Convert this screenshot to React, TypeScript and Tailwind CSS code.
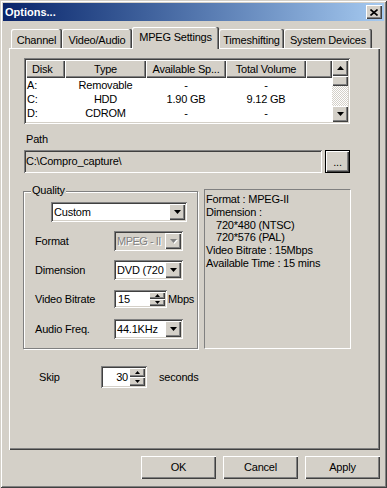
const raised = 'bg-[#d4d0c8] shadow-[inset_1px_1px_0_#fff,inset_-1px_-1px_0_#404040,inset_-2px_-2px_0_#808080]';
const sunken = 'shadow-[inset_1px_1px_0_#808080,inset_-1px_-1px_0_#fff,inset_2px_2px_0_#404040,inset_-2px_-2px_0_#d4d0c8]';

function DownArrow({ disabled = false }: { disabled?: boolean }) {
  return (
    <svg width="7" height="4" viewBox="0 0 7 4" aria-hidden="true" className={disabled ? 'drop-shadow-[1px_1px_0_#fff]' : ''}>
      <polygon points="0,0 7,0 3.5,4" fill={disabled ? '#808080' : '#000'} />
    </svg>
  );
}

function UpArrow() {
  return (
    <svg width="7" height="4" viewBox="0 0 7 4" aria-hidden="true">
      <polygon points="0,4 7,4 3.5,0" fill="#000" />
    </svg>
  );
}

function SpinArrows() {
  return (
    <div className="flex w-[16px] shrink-0 flex-col">
      <span className={`flex flex-1 items-center justify-center ${raised}`}>
        <svg width="5" height="3" viewBox="0 0 5 3" aria-hidden="true">
          <polygon points="0,3 5,3 2.5,0" fill="#000" />
        </svg>
      </span>
      <span className={`flex flex-1 items-center justify-center ${raised}`}>
        <svg width="5" height="3" viewBox="0 0 5 3" aria-hidden="true">
          <polygon points="0,0 5,0 2.5,3" fill="#000" />
        </svg>
      </span>
    </div>
  );
}

function Combo({ value, className, disabled = false }: { value: string; className: string; disabled?: boolean }) {
  return (
    <div
      className={`flex h-[20px] items-center p-[2px] ${sunken} ${
        disabled ? 'bg-[#d4d0c8] tracking-[-0.5px] text-[#808080] [text-shadow:1px_1px_0_#fff]' : 'bg-white'
      } ${className}`}
    >
      <span className="flex-1 overflow-hidden whitespace-nowrap pl-[1px]">{value}</span>
      <span className={`flex h-[16px] w-[16px] shrink-0 items-center justify-center ${raised}`}>
        <DownArrow disabled={disabled} />
      </span>
    </div>
  );
}

function Tab({ label, className }: { label: string; className: string }) {
  return (
    <div
      className={`flex h-[19px] justify-center rounded-t-[2px] pt-[5px] shadow-[inset_-1px_0_0_#404040,inset_-2px_0_0_#808080,inset_1px_1px_0_#fff] ${className}`}
    >
      {label}
    </div>
  );
}

function Row({ label, children, className }: { label: string; children: React.ReactNode; className: string }) {
  return (
    <div className={`flex h-[20px] items-center pl-[11px] ${className}`}>
      <span className="w-[79px]">{label}</span>
      {children}
    </div>
  );
}

const disks = [
  { disk: 'A:', type: 'Removable', avail: '-', total: '-' },
  { disk: 'C:', type: 'HDD', avail: '1.90 GB', total: '9.12 GB' },
  { disk: 'D:', type: 'CDROM', avail: '-', total: '-' },
];

export default function App() {
  return (
    <div className="h-[488px] w-[387px] bg-[#d4d0c8] p-[3px] font-['Liberation_Sans',Arial,sans-serif] text-[11px] leading-[13px] tracking-[-0.2px] text-black shadow-[inset_1px_1px_0_#d4d0c8,inset_-1px_-1px_0_#404040,inset_2px_2px_0_#fff,inset_-2px_-2px_0_#808080]">
      <div className="flex h-[18px] items-center justify-between bg-linear-to-r from-[#0a246a] to-[#a6caf0] pl-[2px] pr-[2px]">
        <span className="font-bold tracking-normal text-white">Options...</span>
        <span className={`flex h-[14px] w-[16px] items-center justify-center ${raised}`}>
          <svg width="8" height="7" viewBox="0 0 8 7" aria-hidden="true">
            <path d="M0.5 0.5L7.5 6.5M7.5 0.5L0.5 6.5" stroke="#000" strokeWidth="1.6" />
          </svg>
        </span>
      </div>

      <div className="pl-[6px] pr-[4px] pt-[6px]">
        <div className="flex h-[21px] items-end pl-[2px]">
          <Tab label="Channel" className="w-[51px]" />
          <Tab label="Video/Audio" className="w-[70px]" />
          <div className="relative z-10 -mb-px flex h-[22px] w-[87px] justify-center rounded-t-[2px] bg-[#d4d0c8] pt-[4px] shadow-[inset_-1px_0_0_#404040,inset_-2px_0_0_#808080,inset_1px_1px_0_#fff]">
            MPEG Settings
          </div>
          <Tab label="Timeshifting" className="w-[65px]" />
          <Tab label="System Devices" className="w-[88px]" />
        </div>

        <div className="h-[402px] bg-[#d4d0c8] pl-[15px] pt-[10px] shadow-[inset_1px_1px_0_#fff,inset_-1px_-1px_0_#404040,inset_-2px_-2px_0_#808080]">
          {/* drive list */}
          <div className={`flex h-[66px] w-[326px] bg-white p-[2px] ${sunken}`}>
            <div className="flex flex-1 flex-col">
              <div className="flex h-[18px]">
                <div className={`flex w-[39px] items-center pl-[6px] ${raised}`}>Disk</div>
                <div className={`flex w-[81px] items-center justify-center ${raised}`}>Type</div>
                <div className={`flex w-[80px] items-center justify-center ${raised}`}>Available Sp...</div>
                <div className={`flex w-[80px] items-center justify-center ${raised}`}>Total Volume</div>
                <div className={`flex-1 ${raised}`} />
              </div>
              {disks.map((d) => (
                <div key={d.disk} className="flex h-[14px] items-center">
                  <span className="w-[39px] pl-[1px]">{d.disk}</span>
                  <span className="w-[81px] text-center">{d.type}</span>
                  <span className="w-[80px] text-center">{d.avail}</span>
                  <span className="w-[80px] text-center">{d.total}</span>
                </div>
              ))}
            </div>
            <div className="flex w-[16px] flex-col">
              <span className={`flex h-[16px] items-center justify-center ${raised}`}>
                <UpArrow />
              </span>
              <span className={`h-[10px] ${raised}`} />
              <span className="flex-1 bg-[repeating-conic-gradient(#fff_0_25%,#d4d0c8_0_50%)] bg-[length:2px_2px]" />
              <span className={`flex h-[16px] items-center justify-center ${raised}`}>
                <DownArrow />
              </span>
            </div>
          </div>

          {/* path */}
          <div className="mt-[9px] pl-[2px]">Path</div>
          <div className="mt-[4px] flex">
            <div className={`flex h-[23px] w-[298px] items-center bg-[#d4d0c8] pl-[2px] ${sunken}`}>C:\Compro_capture\</div>
            <div className="ml-[3px] flex h-[23px] w-[25px] border border-black">
              <span className={`flex flex-1 items-end justify-center pb-[3px] ${raised}`}>...</span>
            </div>
          </div>

          {/* quality + summary */}
          <div className="mt-[16px] flex items-start">
            <div className="relative ml-[-1px] mt-[2px] h-[158px] w-[175px] border border-[#808080] pt-[10px] shadow-[inset_1px_1px_0_#fff,1px_1px_0_#fff]">
              <span className="absolute -top-[8px] left-[7px] bg-[#d4d0c8] px-[1px]">Quality</span>
              <Combo value="Custom" className="ml-[27px] w-[136px]" />
              <Row label="Format" className="mt-[9px]">
                <Combo value="MPEG - II" className="w-[69px]" disabled />
              </Row>
              <Row label="Dimension" className="mt-[9px]">
                <Combo value="DVD (720" className="w-[69px]" />
              </Row>
              <Row label="Video Bitrate" className="mt-[9px]">
                <div className={`flex h-[18px] w-[53px] bg-white p-[2px] ${sunken}`}>
                  <span className="flex flex-1 items-center pl-[2px]">15</span>
                  <SpinArrows />
                </div>
                <span className="ml-[1px]">Mbps</span>
              </Row>
              <Row label="Audio Freq." className="mt-[10px]">
                <Combo value="44.1KHz" className="w-[69px]" />
              </Row>
            </div>

            <div className="ml-[6px] h-[160px] w-[147px] border border-b-white border-l-[#808080] border-r-white border-t-[#808080] pl-[1px] pt-[3px] leading-[12.8px]">
              <div>Format : MPEG-II</div>
              <div>Dimension :</div>
              <div className="pl-[10px]">720*480 (NTSC)</div>
              <div className="pl-[10px]">720*576 (PAL)</div>
              <div>Video Bitrate : 15Mbps</div>
              <div>Available Time : 15 mins</div>
            </div>
          </div>

          {/* skip */}
          <div className="mt-[17px] flex h-[22px] items-center">
            <span className="ml-[15px] w-[62px]">Skip</span>
            <div className={`flex h-[22px] w-[46px] bg-white p-[2px] ${sunken}`}>
              <span className="flex flex-1 items-center justify-end pr-[1px]">30</span>
              <SpinArrows />
            </div>
            <span className="ml-[12px]">seconds</span>
          </div>
        </div>

        <div className="mt-[6px] flex justify-end gap-[7px]">
          <div className={`flex h-[23px] w-[75px] items-center justify-center ${raised}`}>OK</div>
          <div className={`flex h-[23px] w-[75px] items-center justify-center ${raised}`}>Cancel</div>
          <div className={`flex h-[23px] w-[75px] items-center justify-center ${raised}`}>Apply</div>
        </div>
      </div>
    </div>
  );
}
